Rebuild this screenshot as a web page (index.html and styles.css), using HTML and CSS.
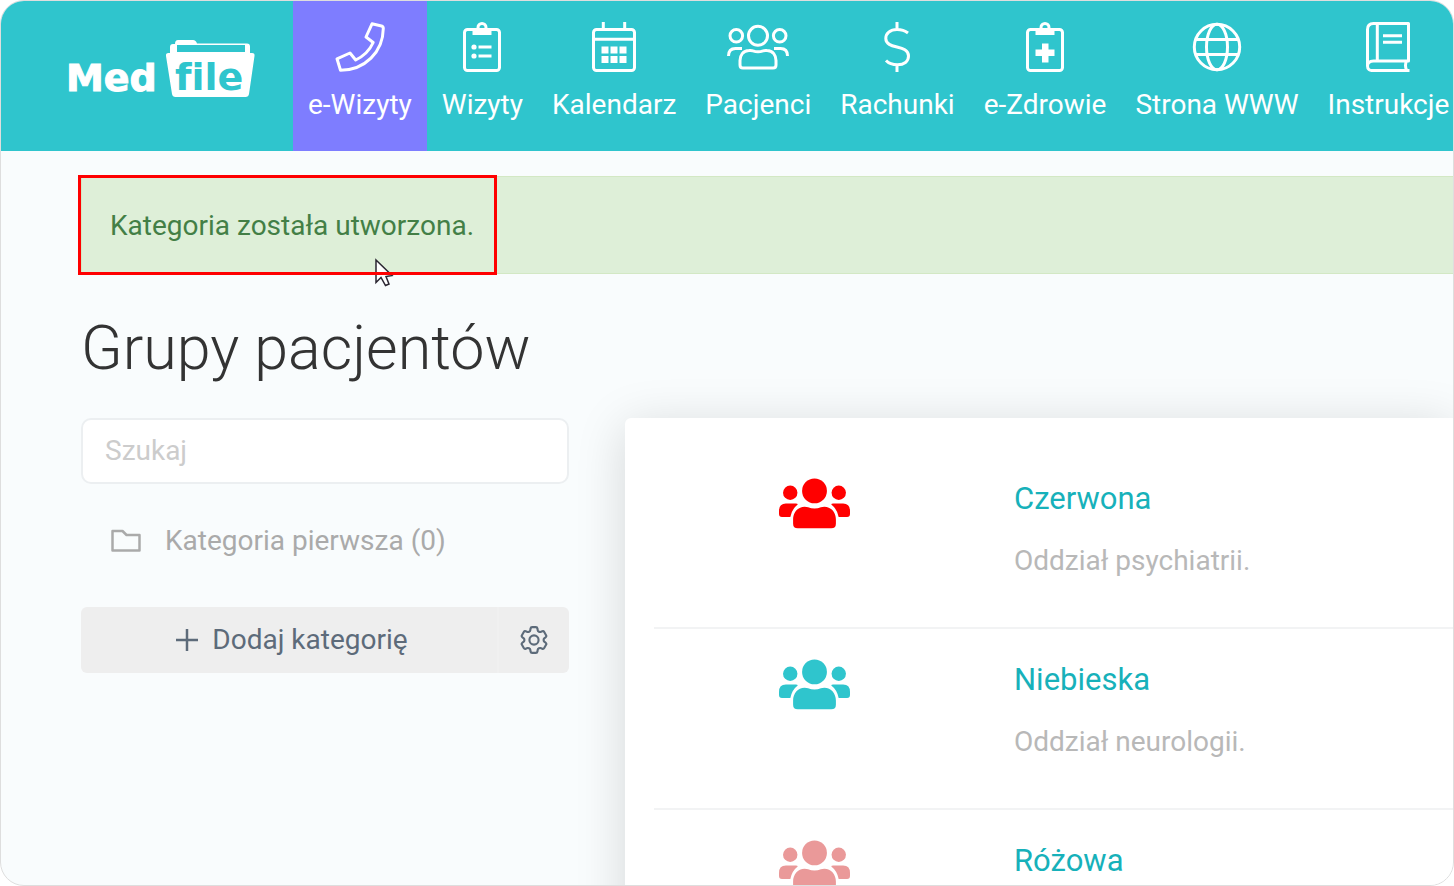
FILE: index.html
```html
<!DOCTYPE html>
<html lang="pl">
<head>
<meta charset="utf-8">
<title>Grupy pacjentów</title>
<link rel="stylesheet" href="styles.css">
</head>
<body>
<svg class="defs" aria-hidden="true">
  <symbol id="group" viewBox="0 0 72 51">
    <circle cx="36" cy="12.7" r="12.6"/>
    <circle cx="11.4" cy="14.6" r="7.3"/>
    <circle cx="60.6" cy="14.6" r="7.3"/>
    <path d="M7 25.5h10q2 0 2 1Q13 31 11.500 39.300H3Q0 39.300 0 36v-3q0-7.500 7-7.500z"/>
    <path d="M65 25.500H55q-2 0-2 1Q59 31 60.500 39.300H69q3 0 3-3.300v-3q0-7.500-7-7.500z"/>
    <path d="M26 28.700q2 0 3.500.6 6.500 2.400 13 0 1.500-.6 3.500-.6c7 0 11.700 6 11.700 13V46q0 4.700-4.700 4.700H19q-4.700 0-4.700-4.700v-4.300c0-7 4.700-13 11.700-13z"/>
  </symbol>
</svg>
<div class="frame">
  <header class="topbar">
    <a class="brand" href="#" aria-label="MedFile">
      <svg width="186" height="58" viewBox="0 0 186 58">
        <path class="solid" fill-rule="evenodd" d="M101 13V7q0-3 3-3h2q0-4 3-4h15q3 0 4 3.500h50q3 0 3 3V13h2q3 0 2.500 3l-5.500 38q-.5 3-3.500 3h-70q-3 0-3.500-3L97 16q-.5-3 2.500-3zM108 5v7h68V5z"/>
        <text class="brand-med" x="-3" y="51">Med</text>
        <text class="brand-file" x="106" y="50">file</text>
      </svg>
    </a>
    <nav class="menu">
      <a class="menu-item active" href="#">
        <svg width="50" height="50"><path d="M37 1.800l9.500 2.200q1.800.5 1.800 2.500C48 30 30 48 5.500 48.300L2 36.800l13-5.800 5.700 7Q33 32 38.200 20.500L31 15z"/></svg>
        <span>e-Wizyty</span>
      </a>
      <a class="menu-item" href="#">
        <svg width="38" height="50"><rect x="1.500" y="7.500" width="35" height="41" rx="3"/><circle cx="19" cy="5.500" r="4"/><path class="solid" d="M9.500 8.500h5l1.500-2 3 2.500 3-2.500 1.500 2h5V13h-19z"/><path d="M15.500 25h13M15.500 34h13"/><circle class="solid" cx="11" cy="25" r="2.600"/><circle class="solid" cx="11" cy="34" r="2.600"/></svg>
        <span>Wizyty</span>
      </a>
      <a class="menu-item" href="#">
        <svg width="44" height="50"><rect x="1.500" y="7.500" width="41" height="41" rx="3"/><path d="M11.300 0v7M32.700 0v7M1 17.300h42"/><path class="solid" d="M9.500 24.500h7v7h-7zM18.500 24.500h7v7h-7zM27.500 24.500h7v7h-7zM9.500 34h7v7h-7zM18.500 34h7v7h-7zM27.500 34h7v7h-7z"/></svg>
        <span>Kalendarz</span>
      </a>
      <a class="menu-item" href="#">
        <svg width="62" height="50"><circle cx="31" cy="13.800" r="9.500"/><circle cx="9.300" cy="13.800" r="6.300"/><circle cx="52.700" cy="13.800" r="6.300"/><path d="M1.500 34q0-7.500 7-7.500h6.500M60.500 34q0-7.500-7-7.500H47M22 28.500q2.500-.3 4 .4 5 1.900 10 0 1.500-.7 4-.4c6 0 9 5 9 10V43q0 3-3 3H16q-3 0-3-3v-4.500c0-5 3-10 9-10z"/></svg>
        <span>Pacjenci</span>
      </a>
      <a class="menu-item" href="#">
        <svg width="26" height="50"><path d="M13 0v7.500M13 42.500V50M24 11Q19.500 7.500 13 7.500C6 7.500 1.800 11.500 1.800 16.500 1.800 28 24.500 22 24.500 34c0 5.500-4.500 8.800-11 8.800Q6 42.800 2 38.500"/></svg>
        <span>Rachunki</span>
      </a>
      <a class="menu-item" href="#">
        <svg width="38" height="50"><rect x="1.500" y="7.500" width="35" height="41" rx="3"/><circle cx="19" cy="5.500" r="4"/><path class="solid" d="M9.500 8.500h5l1.500-2 3 2.500 3-2.500 1.500 2h5V13h-19z"/><path class="solid" d="M16 21.500h6.500v6H28.500v6.500h-6v6.500H16V34H9.500v-6.500H16z"/></svg>
        <span>e-Zdrowie</span>
      </a>
      <a class="menu-item" href="#">
        <svg width="50" height="50"><circle cx="25" cy="25" r="22.700"/><ellipse cx="25" cy="25" rx="10.500" ry="22.700"/><path d="M3.500 17.500h43M3.500 32.500h43"/></svg>
        <span>Strona WWW</span>
      </a>
      <a class="menu-item" href="#">
        <svg width="44" height="50"><path d="M1.500 44V7.500q0-6 6-6h35V39H7.500q-6 0-6 5t6 4.500h36M40.500 39q-2 4.500 0 9M11.300 1.500V39M17 13.800h19M17 20.200h19"/></svg>
        <span>Instrukcje</span>
      </a>
    </nav>
  </header>
  <main class="content">
    <div class="alert" role="status">
      Kategoria została utworzona.
      <svg class="pointer" width="20" height="30" viewBox="0 0 20 30"><path class="pointer-fill" d="M2 2v22.500l5-5 4.500 8 3.500-1.500-3-7.500 6-1z"/></svg>
      <span class="marker"></span>
    </div>
    <h1 class="title">Grupy pacjentów</h1>
    <div class="columns">
      <aside class="sidebar">
        <input class="search" type="search" placeholder="Szukaj" aria-label="Szukaj">
        <a class="category" href="#">
          <svg width="30" height="24"><path d="M1.500 2h10l4 4H28.500v15.500h-27z"/></svg>
          <span>Kategoria pierwsza (0)</span>
        </a>
        <div class="actions">
          <button class="add" type="button">
            <svg width="22" height="22"><path d="M11 0v22M0 11h22"/></svg>
            <span>Dodaj kategorię</span>
          </button>
          <button class="settings" type="button" aria-label="Ustawienia">
            <svg width="28" height="28" viewBox="2.200 2.200 19.600 19.600"><path d="M9.594 3.940c.09-.542.56-.94 1.110-.94h2.593c.55 0 1.020.398 1.110.94l.213 1.281c.063.374.313.686.645.87.074.04.147.083.22.127.325.196.72.257 1.075.124l1.217-.456a1.125 1.125 0 0 1 1.370.49l1.296 2.247a1.125 1.125 0 0 1-.26 1.431l-1.003.827c-.293.241-.438.613-.43.992a7.723 7.723 0 0 1 0 .255c-.008.378.137.75.43.991l1.004.827c.424.35.534.955.26 1.430l-1.298 2.247a1.125 1.125 0 0 1-1.369.491l-1.217-.456c-.355-.133-.75-.072-1.076.124a6.470 6.470 0 0 1-.22.128c-.331.183-.581.495-.644.869l-.213 1.281c-.09.543-.56.94-1.110.94h-2.594c-.55 0-1.019-.398-1.110-.94l-.213-1.281c-.062-.374-.312-.686-.644-.87a6.520 6.520 0 0 1-.22-.127c-.325-.196-.72-.257-1.076-.124l-1.217.456a1.125 1.125 0 0 1-1.369-.49l-1.297-2.247a1.125 1.125 0 0 1 .26-1.431l1.004-.827c.292-.24.437-.613.43-.991a6.932 6.932 0 0 1 0-.255c.007-.38-.138-.751-.43-.992l-1.004-.827a1.125 1.125 0 0 1-.26-1.430l1.297-2.247a1.125 1.125 0 0 1 1.370-.491l1.216.456c.356.133.751.072 1.076-.124.072-.044.146-.086.22-.128.332-.183.582-.495.644-.869l.214-1.280Z"/><circle cx="12" cy="12" r="3.200"/></svg>
          </button>
        </div>
      </aside>
      <section class="card">
        <article class="row">
          <svg class="group-icon red" width="71" height="51"><use href="#group"/></svg>
          <div class="info"><a class="name" href="#">Czerwona</a><p class="desc">Oddział psychiatrii.</p></div>
        </article>
        <article class="row">
          <svg class="group-icon blue" width="71" height="51"><use href="#group"/></svg>
          <div class="info"><a class="name" href="#">Niebieska</a><p class="desc">Oddział neurologii.</p></div>
        </article>
        <article class="row">
          <svg class="group-icon pink" width="71" height="51"><use href="#group"/></svg>
          <div class="info"><a class="name" href="#">Różowa</a></div>
        </article>
      </section>
    </div>
  </main>
</div>
</body>
</html>
```

FILE: styles.css
```css
* { box-sizing: border-box; }

body {
  margin: 0;
  background: #fff;
  font-family: Roboto, "Liberation Sans", sans-serif;
  font-size: 28px;
  line-height: 40px;
}

a { color: inherit; text-decoration: none; }
svg { display: block; flex: none; }

.defs { position: absolute; width: 0; height: 0; }

.frame {
  height: 100vh;
  overflow: hidden;
  border: 1px solid #dedede;
  border-radius: 24px;
  background: #f9fcfd;
}

.topbar {
  display: flex;
  background: #2fc5cd;
  color: #fff;
}

.brand {
  display: flex;
  flex: none;
  align-items: flex-start;
  padding: 39px 38px 0 68px;
}

.brand svg { overflow: visible; }

.brand text {
  font-family: "DejaVu Sans", sans-serif;
  font-size: 38px;
  font-variant-ligatures: none;
  font-weight: 700;
}

.brand-med { fill: #fff; stroke: #fff; stroke-width: 1px; }
.brand-file { fill: #2fc5cd; }

.solid { fill: #fff; stroke: none; }

.menu { display: flex; }

.menu-item {
  display: flex;
  flex: none;
  flex-direction: column;
  align-items: center;
  gap: 15px;
  padding: 21px 14px 28px 15px;
  line-height: 36px;
  white-space: nowrap;
}

.menu-item.active { padding-right: 15px; background: #7e7dff; }

.menu-item svg {
  fill: none;
  stroke: #fff;
  stroke-width: 3px;
  stroke-linejoin: round;
}

.menu-item svg .solid { fill: #fff; stroke: none; }

.content { padding: 25px 0 0 80px; }

.alert {
  position: relative;
  padding: 29px 28px 27px;
  border: 1px solid #d3e8c4;
  border-right: 0;
  background: #deefd8;
  color: #437f46;
}

.marker {
  position: absolute;
  top: -2px;
  left: -4px;
  width: 419px;
  height: 100px;
  border: 3px solid #f00;
}

.pointer { position: absolute; top: 81px; left: 292px; }

.pointer-fill {
  fill: #fff;
  stroke: #2b2632;
  stroke-width: 1.5px;
}

.title {
  margin: 39px 0 35px;
  color: #333;
  font-size: 61px;
  font-weight: 300;
  line-height: 70px;
}

.columns { display: flex; align-items: flex-start; gap: 56px; }

.sidebar {
  display: flex;
  flex: none;
  flex-direction: column;
  width: 488px;
}

.search {
  width: 100%;
  height: 66px;
  padding: 0 22px 2px;
  border: 2px solid #eceff1;
  border-radius: 10px;
  background: #fff;
  color: #555;
  font: inherit;
}

.search::placeholder { color: #ccc; opacity: 1; }

.category {
  display: flex;
  align-items: center;
  gap: 24px;
  padding: 37px 30px 46px;
  color: #aaa;
}

.category svg { fill: none; stroke: #aaa; stroke-width: 2.5px; stroke-linejoin: round; }

.actions {
  display: flex;
  overflow: hidden;
  height: 66px;
  border-radius: 6px;
  background: #eee;
}

.actions button {
  display: flex;
  align-items: center;
  justify-content: center;
  padding: 0;
  border: 0;
  background: none;
  color: #5d6b7a;
  font: inherit;
}

.actions svg { fill: none; stroke: #5d6b7a; stroke-width: 2.5px; }
.actions .add { flex: 1; gap: 14px; padding-left: 6px; }
.actions .settings { width: 72px; border-left: 2px solid #f0f0f0; }
.settings svg { stroke-width: 1.5px; }

.card {
  flex: 1;
  padding: 30px 0 0 29px;
  border-radius: 6px 0 0 6px;
  background: #fff;
  box-shadow: 0 8px 50px rgba(0, 0, 0, 0.15);
}

.row {
  display: grid;
  grid-template-columns: 320px 1fr;
  column-gap: 40px;
  padding: 30px 0 46px;
  border-bottom: 2px solid #f2f3f4;
}

.group-icon { justify-self: center; }
.red { fill: #f00; }
.blue { fill: #2fc5cd; }
.pink { fill: #ea9999; }

.info { display: flex; flex-direction: column; gap: 22px; padding-top: 1px; }
.name { color: #17b1ba; font-size: 31px; }
.desc { margin: 0; color: #b8b8b8; }
```
